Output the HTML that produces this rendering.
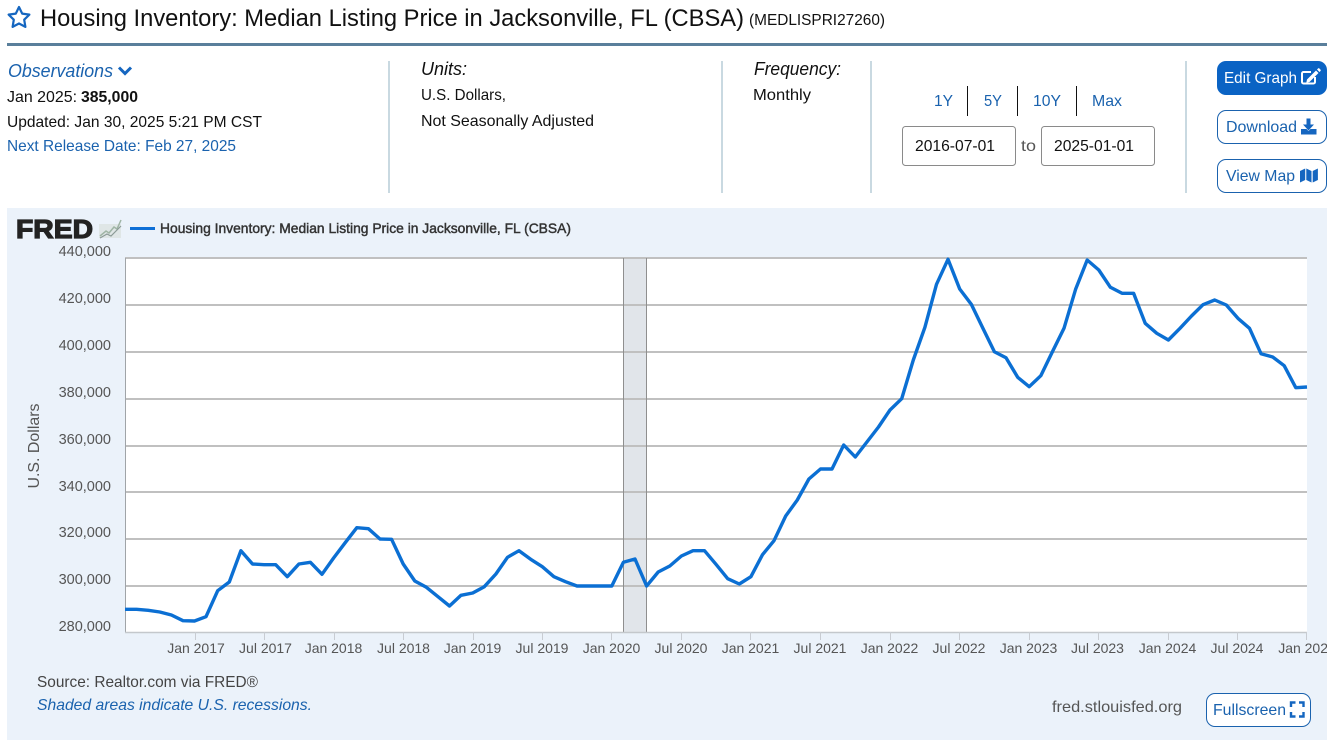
<!DOCTYPE html>
<html lang="en"><head><meta charset="utf-8"><title>Housing Inventory: Median Listing Price in Jacksonville, FL (CBSA)</title>
<style>
html,body{margin:0;padding:0;background:#fff;width:1337px;height:746px;overflow:hidden}
svg{display:block}
text{font-family:"Liberation Sans",sans-serif;white-space:pre}
.t{font-size:16px;fill:#111}
.b{font-size:16px;fill:#1a62ae}
.y{font-size:14.5px;fill:#555;text-anchor:end}
.x{font-size:14px;fill:#555;text-anchor:middle}
.g{stroke:#c0c0c0;stroke-width:2}
.d{stroke:#c9d9e1;stroke-width:2}
.k{stroke:#c8ccd2;stroke-width:1}
</style></head><body>
<svg width="1337" height="746" viewBox="0 0 1337 746" xmlns="http://www.w3.org/2000/svg">
<defs><clipPath id="panel"><rect x="7" y="208" width="1320" height="532"/></clipPath></defs>
<rect width="1337" height="746" fill="#fff"/>

<polygon points="19,7 22.2,13.6 29.4,14.6 24.2,19.7 25.4,26.9 19,23.5 12.6,26.9 13.8,19.7 8.6,14.6 15.8,13.6" fill="none" stroke="#1566c0" stroke-width="2.2" stroke-linejoin="round"/>
<text x="40" y="26" font-size="24" fill="#111" textLength="704" lengthAdjust="spacingAndGlyphs">Housing Inventory: Median Listing Price in Jacksonville, FL (CBSA)</text>
<text x="749" y="25" font-size="16" fill="#111" textLength="136" lengthAdjust="spacingAndGlyphs">(MEDLISPRI27260)</text>
<rect x="7" y="43" width="1320" height="3" fill="#5a7f9b"/>

<text x="8" y="77" font-size="18" font-style="italic" fill="#1a62ae" textLength="105" lengthAdjust="spacingAndGlyphs">Observations</text>
<polyline points="119,67.5 125,73.5 131,67.5" fill="none" stroke="#1566c0" stroke-width="3"/>
<text class="t" x="7" y="102" textLength="70" lengthAdjust="spacingAndGlyphs">Jan 2025:</text>
<text class="t" x="81" y="102" font-weight="bold" textLength="57" lengthAdjust="spacingAndGlyphs">385,000</text>
<text class="t" x="7" y="127" textLength="255" lengthAdjust="spacingAndGlyphs">Updated: Jan 30, 2025 5:21 PM CST</text>
<text class="b" x="7" y="151" textLength="229" lengthAdjust="spacingAndGlyphs">Next Release Date: Feb 27, 2025</text>

<line class="d" x1="389" y1="61" x2="389" y2="193"/>
<line class="d" x1="722" y1="61" x2="722" y2="193"/>
<line class="d" x1="871" y1="61" x2="871" y2="193"/>
<line class="d" x1="1186" y1="61" x2="1186" y2="193"/>

<text x="421" y="75" font-size="18" font-style="italic" fill="#111" textLength="46" lengthAdjust="spacingAndGlyphs">Units:</text>
<text class="t" x="421" y="100" textLength="85" lengthAdjust="spacingAndGlyphs">U.S. Dollars,</text>
<text class="t" x="421" y="126" textLength="173" lengthAdjust="spacingAndGlyphs">Not Seasonally Adjusted</text>
<text x="754" y="75" font-size="18" font-style="italic" fill="#111" textLength="87" lengthAdjust="spacingAndGlyphs">Frequency:</text>
<text class="t" x="753" y="100" textLength="58" lengthAdjust="spacingAndGlyphs">Monthly</text>

<text class="b" x="934" y="106" textLength="19" lengthAdjust="spacingAndGlyphs">1Y</text>
<text class="b" x="984" y="106" textLength="18" lengthAdjust="spacingAndGlyphs">5Y</text>
<text class="b" x="1033" y="106" textLength="28" lengthAdjust="spacingAndGlyphs">10Y</text>
<text class="b" x="1092" y="106" textLength="30" lengthAdjust="spacingAndGlyphs">Max</text>
<line x1="967.5" y1="86" x2="967.5" y2="116" stroke="#111"/>
<line x1="1017.5" y1="86" x2="1017.5" y2="116" stroke="#111"/>
<line x1="1076.5" y1="86" x2="1076.5" y2="116" stroke="#111"/>

<rect x="902.5" y="126.5" width="113" height="39" rx="3" fill="#fff" stroke="#8a8a8a"/>
<rect x="1041.5" y="126.5" width="113" height="39" rx="3" fill="#fff" stroke="#8a8a8a"/>
<text class="t" x="915" y="151" textLength="80" lengthAdjust="spacingAndGlyphs">2016-07-01</text>
<text x="1021" y="151" font-size="16" fill="#555" textLength="15" lengthAdjust="spacingAndGlyphs">to</text>
<text class="t" x="1054" y="151" textLength="80" lengthAdjust="spacingAndGlyphs">2025-01-01</text>

<rect x="1217" y="61" width="110" height="34" rx="9" fill="#0a63c4"/>
<text x="1224" y="83" font-size="16" fill="#fff" textLength="73" lengthAdjust="spacingAndGlyphs">Edit Graph</text>
<path d="M1311 72h-7.5a1.5 1.5 0 0 0-1.5 1.5v8.5a1.5 1.5 0 0 0 1.5 1.5h10a1.5 1.5 0 0 0 1.5-1.5v-5" fill="none" stroke="#fff" stroke-width="2"/>
<path d="M1307 79.5l9-9 2.5 2.5-9 9-3.2.7zM1317 69.5l1-1a1 1 0 0 1 1.4 0l1.1 1.1a1 1 0 0 1 0 1.4l-1 1z" fill="#fff"/>

<rect x="1217.5" y="110.5" width="109" height="33" rx="8.5" fill="#fff" stroke="#1a62ae"/>
<text class="b" x="1226" y="132" textLength="71" lengthAdjust="spacingAndGlyphs">Download</text>
<path d="M1306.5 118.5h4v6h3.5l-5.5 6-5.5-6h3.5z" fill="#1566c0"/>
<path d="M1301 129h5.5l2 2 2-2h6v5.5h-15.5z" fill="#1566c0"/>

<rect x="1217.5" y="159.5" width="109" height="33" rx="8.5" fill="#fff" stroke="#1a62ae"/>
<text class="b" x="1226" y="181" textLength="69" lengthAdjust="spacingAndGlyphs">View Map</text>
<path d="M1300 171l5.200-2.500v11.500l-5.200 2.500zM1306.300 168.500l5.200 2.500v11.500l-5.200-2.500zM1312.700 171l5.200-2.500v11.500l-5.200 2.500z" fill="#1566c0"/>

<rect x="7" y="208" width="1320" height="532" fill="#ebf2fa"/>

<text x="16" y="238" font-size="26" font-weight="bold" fill="#222" stroke="#222" stroke-width="1.2" textLength="77" lengthAdjust="spacingAndGlyphs">FRED</text>
<rect x="99" y="224" width="22" height="14" fill="#dfe6e6"/>
<polyline points="100,236 106,231 109,233 114,227 117,229 121,220" fill="none" stroke="#9fb5a5" stroke-width="1.5"/>
<polyline points="100,238 107,234 111,236 116,231 121,226" fill="none" stroke="#8b9a96" stroke-width="1.2"/>
<line x1="130" y1="228.5" x2="155" y2="228.5" stroke="#0e6fd6" stroke-width="3"/>
<text x="160" y="233" font-size="14" fill="#333" stroke="#333" stroke-width=".45" textLength="411" lengthAdjust="spacingAndGlyphs">Housing Inventory: Median Listing Price in Jacksonville, FL (CBSA)</text>

<rect x="125" y="258" width="1182" height="374" fill="#fff"/>
<rect x="623.5" y="258" width="23" height="374" fill="#e1e5ea"/>
<line class="g" x1="125" y1="258" x2="1307" y2="258"/>
<line class="g" x1="125" y1="305" x2="1307" y2="305"/>
<line class="g" x1="125" y1="352" x2="1307" y2="352"/>
<line class="g" x1="125" y1="399" x2="1307" y2="399"/>
<line class="g" x1="125" y1="446" x2="1307" y2="446"/>
<line class="g" x1="125" y1="492" x2="1307" y2="492"/>
<line class="g" x1="125" y1="539" x2="1307" y2="539"/>
<line class="g" x1="125" y1="586" x2="1307" y2="586"/>
<line x1="623.5" y1="258" x2="623.5" y2="632" stroke="#8f8f8f"/>
<line x1="646.5" y1="258" x2="646.5" y2="632" stroke="#8f8f8f"/>
<line x1="125.5" y1="258" x2="125.5" y2="632" stroke="#a0a4a8"/>
<line x1="125" y1="632.5" x2="1307" y2="632.5" stroke="#c4c8cc" stroke-width="1.5"/>

<path class="k" d="M195.500 632v8M264.500 632v8M334.500 632v8M403.500 632v8M473.500 632v8M542.500 632v8M611.500 632v8M681.500 632v8M750.500 632v8M820.500 632v8M890.500 632v8M959.500 632v8M1029.500 632v8M1098.500 632v8M1168.500 632v8M1237.500 632v8M1306.500 632v8" fill="none"/>

<polyline fill="none" stroke="#0b6fd3" stroke-width="3.4" stroke-linejoin="round" points="125,609.300 136.600,609.300 148.200,610.300 159.800,612 171.400,615 183,620.700 194.500,621 206,616.700 217.700,590.700 229.300,582 240.900,550.700 252.500,564 264,564.700 275.700,564.700 287.300,576.700 298.900,564 310.400,562.300 322,574.300 333.600,558 345.200,542.700 356.800,527.700 368.400,528.700 380,539 391.600,539.300 403.200,564 414.800,581 426.400,587.300 438,596.700 449.500,606 461,595.300 472.700,593 484.300,586.700 495.900,574 507.500,557.300 519,550.700 530.700,559.300 542.300,566.700 553.900,576.700 565.500,581.700 577,586 588.700,586 600.200,586 611.800,586 623.400,562.300 635,559 646.600,586 658.200,572 669.800,566 681.400,556 693,550.700 704.500,550.700 716,564.300 727.700,578.700 739.300,584 750.900,576.700 762.500,554.700 774,540.700 785.700,516 797.300,500 808.900,479 820.500,469 832,469 843.700,445 855.300,457 866.900,442 878.500,427 890,410 901.700,398.700 913.300,360 924.900,327.300 936.500,284.300 948,259.300 959.700,289 971.300,304.300 982.900,328.300 994.400,351.700 1006,357.700 1017.700,377.300 1029.200,386.700 1040.800,375.700 1052.400,351.700 1064,328.300 1075.600,289.300 1087.200,260 1098.800,270 1110.400,287.300 1122,293.300 1133.600,293.300 1145.200,323.300 1156.800,333.300 1168.400,340 1180,328.300 1191.500,316 1203,304.700 1214.700,300 1226.300,305 1237.900,318.300 1249.500,328.300 1261,353.700 1272.700,357 1284.200,365.700 1295.800,387.700 1307,387"/>

<text class="y" x="111" y="256">440,000</text>
<text class="y" x="111" y="303">420,000</text>
<text class="y" x="111" y="350">400,000</text>
<text class="y" x="111" y="397">380,000</text>
<text class="y" x="111" y="444">360,000</text>
<text class="y" x="111" y="491">340,000</text>
<text class="y" x="111" y="537">320,000</text>
<text class="y" x="111" y="584">300,000</text>
<text class="y" x="111" y="631">280,000</text>
<text x="0" y="0" font-size="16" fill="#555" text-anchor="middle" transform="translate(39,446) rotate(-90)" textLength="85" lengthAdjust="spacingAndGlyphs">U.S. Dollars</text>

<g clip-path="url(#panel)">
<text class="x" x="196" y="653">Jan 2017</text>
<text class="x" x="265.5" y="653">Jul 2017</text>
<text class="x" x="333.5" y="653">Jan 2018</text>
<text class="x" x="403.5" y="653">Jul 2018</text>
<text class="x" x="472.5" y="653">Jan 2019</text>
<text class="x" x="542" y="653">Jul 2019</text>
<text class="x" x="611.5" y="653">Jan 2020</text>
<text class="x" x="681" y="653">Jul 2020</text>
<text class="x" x="750.5" y="653">Jan 2021</text>
<text class="x" x="820" y="653">Jul 2021</text>
<text class="x" x="889.5" y="653">Jan 2022</text>
<text class="x" x="959" y="653">Jul 2022</text>
<text class="x" x="1028.5" y="653">Jan 2023</text>
<text class="x" x="1097.5" y="653">Jul 2023</text>
<text class="x" x="1167.5" y="653">Jan 2024</text>
<text class="x" x="1237" y="653">Jul 2024</text>
<text class="x" x="1307" y="653">Jan 2025</text>
</g>

<text x="37" y="687" font-size="16" fill="#444" textLength="221" lengthAdjust="spacingAndGlyphs">Source: Realtor.com via FRED®</text>
<text x="37" y="710" font-size="16" font-style="italic" fill="#1a62ae" textLength="275" lengthAdjust="spacingAndGlyphs">Shaded areas indicate U.S. recessions.</text>
<text x="1052" y="712" font-size="16" fill="#555" textLength="130" lengthAdjust="spacingAndGlyphs">fred.stlouisfed.org</text>
<rect x="1206.5" y="693.5" width="104" height="33" rx="8.5" fill="#fff" stroke="#1a62ae"/>
<text class="b" x="1213" y="715" textLength="73" lengthAdjust="spacingAndGlyphs">Fullscreen</text>
<path d="M1291 707v-4.500h4.500M1299 702.500h4.500v4.500M1303.500 712v4.500h-4.500M1295.500 716.500h-4.500v-4.500" fill="none" stroke="#1566c0" stroke-width="2.4"/>
</svg>
</body></html>
